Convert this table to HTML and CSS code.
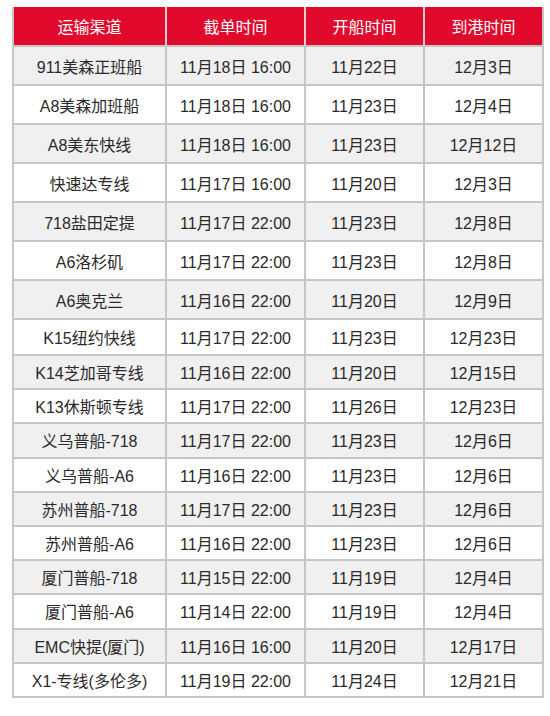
FILE: index.html
```html
<!DOCTYPE html>
<html lang="zh-CN">
<head>
<meta charset="utf-8">
<title>运输渠道时间表</title>
<link rel="stylesheet" href="styles.css">
</head>
<body>
<table class="sched">
  <colgroup>
    <col class="c1"><col class="c2"><col class="c3"><col class="c4">
  </colgroup>
  <thead>
    <tr><th>运输渠道</th><th>截单时间</th><th>开船时间</th><th>到港时间</th></tr>
  </thead>
  <tbody>
    <tr class="tall"><td>911美森正班船</td><td>11月18日 16:00</td><td>11月22日</td><td>12月3日</td></tr>
    <tr class="tall"><td>A8美森加班船</td><td>11月18日 16:00</td><td>11月23日</td><td>12月4日</td></tr>
    <tr class="tall"><td>A8美东快线</td><td>11月18日 16:00</td><td>11月23日</td><td>12月12日</td></tr>
    <tr class="tall"><td>快速达专线</td><td>11月17日 16:00</td><td>11月20日</td><td>12月3日</td></tr>
    <tr class="tall"><td>718盐田定提</td><td>11月17日 22:00</td><td>11月23日</td><td>12月8日</td></tr>
    <tr class="tall"><td>A6洛杉矶</td><td>11月17日 22:00</td><td>11月23日</td><td>12月8日</td></tr>
    <tr class="tall"><td>A6奥克兰</td><td>11月16日 22:00</td><td>11月20日</td><td>12月9日</td></tr>
    <tr class="mid"><td>K15纽约快线</td><td>11月17日 22:00</td><td>11月23日</td><td>12月23日</td></tr>
    <tr><td>K14芝加哥专线</td><td>11月16日 22:00</td><td>11月20日</td><td>12月15日</td></tr>
    <tr><td>K13休斯顿专线</td><td>11月17日 22:00</td><td>11月26日</td><td>12月23日</td></tr>
    <tr><td>义乌普船-718</td><td>11月17日 22:00</td><td>11月23日</td><td>12月6日</td></tr>
    <tr><td>义乌普船-A6</td><td>11月16日 22:00</td><td>11月23日</td><td>12月6日</td></tr>
    <tr><td>苏州普船-718</td><td>11月17日 22:00</td><td>11月23日</td><td>12月6日</td></tr>
    <tr><td>苏州普船-A6</td><td>11月16日 22:00</td><td>11月23日</td><td>12月6日</td></tr>
    <tr><td>厦门普船-718</td><td>11月15日 22:00</td><td>11月19日</td><td>12月4日</td></tr>
    <tr><td>厦门普船-A6</td><td>11月14日 22:00</td><td>11月19日</td><td>12月4日</td></tr>
    <tr><td>EMC快提(厦门)</td><td>11月16日 16:00</td><td>11月20日</td><td>12月17日</td></tr>
    <tr><td>X1-专线(多伦多)</td><td>11月19日 22:00</td><td>11月24日</td><td>12月21日</td></tr>
  </tbody>
</table>
</body>
</html>
```
FILE: styles.css
```css
html, body {
  margin: 0;
  padding: 0;
  background: #ffffff;
}

body {
  padding: 7px 0 0 12px;
  font-family: "Liberation Sans", "Noto Sans CJK SC", sans-serif;
  color: #2a2a2a;
}

.sched {
  border-collapse: collapse;
  table-layout: fixed;
  width: 530px;
  font-size: 16px;
}

.c1 { width: 153px; }
.c2 { width: 139px; }
.c3 { width: 119px; }
.c4 { width: 119px; }

.sched th {
  background: #e10a2c;
  color: #ffffff;
  font-weight: normal;
  height: 38px;
  padding: 0;
  text-align: center;
  vertical-align: middle;
  border-left: 2px solid #f3c9cf;
  border-right: 2px solid #f3c9cf;
  border-bottom: 2px solid #c6c6c6;
}

.sched th:first-child { border-left: 2px solid #c6c6c6; }
.sched th:last-child { border-right: 2px solid #c6c6c6; }

.sched td {
  box-sizing: border-box;
  border: 2px solid #c6c6c6;
  height: 34.2px;
  padding: 0;
  text-align: center;
  vertical-align: middle;
}

.sched tbody tr:nth-child(odd) td { background: #f0f0f0; }
.sched tbody tr:nth-child(even) td { background: #ffffff; }

.sched tr.tall td { height: 39px; }
.sched tr.mid td { height: 36px; }
```
